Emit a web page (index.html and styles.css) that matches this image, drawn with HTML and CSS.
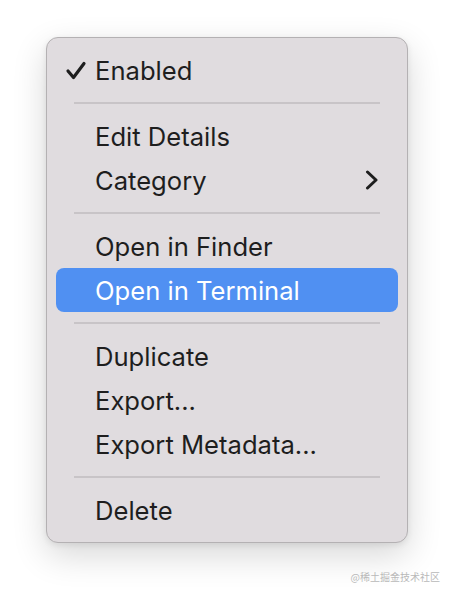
FILE: index.html
```html
<!DOCTYPE html>
<html>
<head>
<meta charset="utf-8">
<link rel="stylesheet" href="styles.css">
</head>
<body>
<div class="menu">
  <div class="item"><svg class="check" width="22" height="20" viewBox="0 0 22 20"><polyline points="3,10 8.5,16.5 19,2.5" fill="none" stroke="#1e1e1e" stroke-width="3.2" stroke-linecap="round" stroke-linejoin="round"/></svg>Enabled</div>
  <div class="sep"></div>
  <div class="item">Edit Details</div>
  <div class="item">Category<svg class="chev" width="14" height="20" viewBox="0 0 14 20"><polyline points="2.5,2 11,10 2.5,18" fill="none" stroke="#1e1e1e" stroke-width="3" stroke-linecap="round" stroke-linejoin="round"/></svg></div>
  <div class="sep"></div>
  <div class="item">Open in Finder</div>
  <div class="item active">Open in Terminal</div>
  <div class="sep"></div>
  <div class="item">Duplicate</div>
  <div class="item">Export...</div>
  <div class="item">Export Metadata...</div>
  <div class="sep"></div>
  <div class="item">Delete</div>
</div>
<div class="mark">@稀土掘金技术社区</div>
</body>
</html>
```
FILE: styles.css
```css
html, body {
  margin: 0;
  background: #ffffff;
}
body {
  padding: 37px 0 0 46px;
  height: 596px;
  box-sizing: border-box;
  position: relative;
  font-family: Inter, "Liberation Sans", sans-serif;
}
.menu {
  width: 362px;
  box-sizing: border-box;
  background: #e0dcdf;
  border: 1px solid #b4b1b3;
  border-radius: 12px;
  padding: 10px 9px 10px 9px;
  box-shadow: 0 12px 34px rgba(0, 0, 0, 0.16), 0 2px 6px rgba(0, 0, 0, 0.08);
}
.item {
  height: 44px;
  box-sizing: border-box;
  display: flex;
  align-items: center;
  padding-left: 39px;
  padding-right: 20px;
  padding-top: 1px;
  font-size: 25.6px;
  color: #1e1e1e;
  border-radius: 8px;
  position: relative;
}
.item.active {
  background: #5090f2;
  color: #ffffff;
}
.check {
  position: absolute;
  left: 9px;
  top: 13px;
}
.chev {
  margin-left: auto;
  margin-right: -1px;
  margin-top: -1px;
}
.sep {
  height: 22px;
  display: flex;
  align-items: center;
  padding: 0 18px;
}
.sep::before {
  content: "";
  display: block;
  flex: 1;
  height: 2px;
  background: #c8c4c7;
}
.mark {
  position: absolute;
  right: 14px;
  bottom: 12px;
  font-family: "Noto Sans CJK SC", sans-serif;
  font-size: 10px;
  color: #b9b9b9;
}
```
